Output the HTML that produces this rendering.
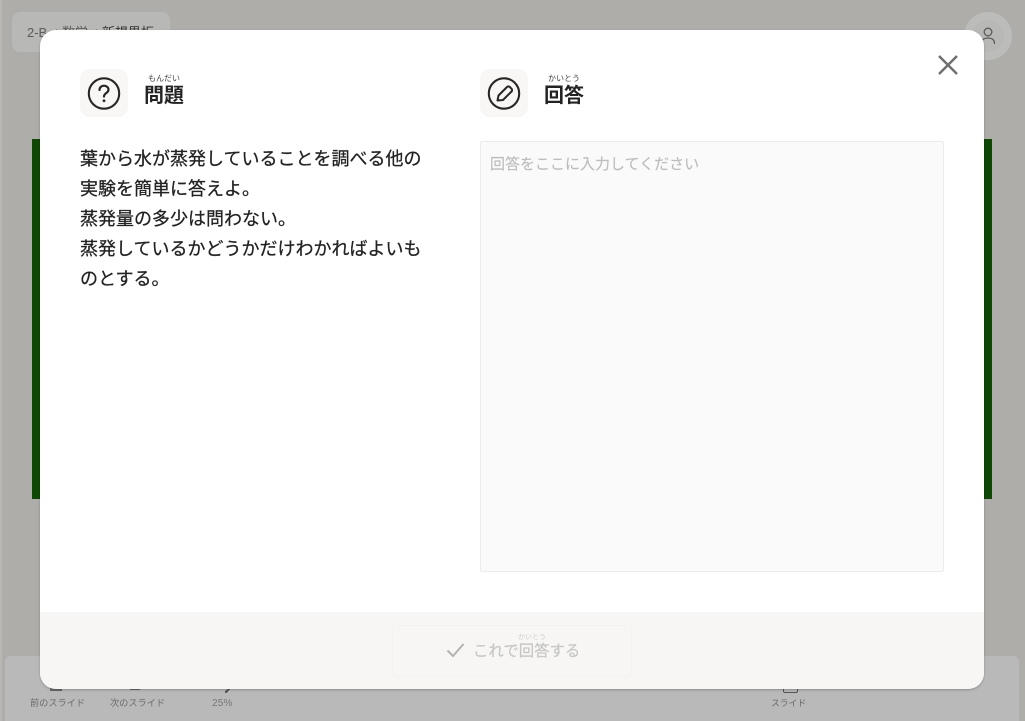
<!DOCTYPE html>
<html lang="ja">
<head>
<meta charset="utf-8">
<style>
*{box-sizing:border-box;margin:0;padding:0}
html,body{width:1025px;height:721px;overflow:hidden}
body{position:relative;background:#aeada9;font-family:"Liberation Sans","Noto Sans CJK JP",sans-serif;color:#232323}
.a{position:absolute;white-space:nowrap}
.t{line-height:1}
</style>
</head>
<body>
<div class="a" style="left:0;top:0;width:2px;height:721px;background:#b8b7b3"></div>
<div class="a" style="left:12px;top:12px;width:158px;height:40px;background:#b8b8b6;border-radius:8px"></div>
<div class="a t" style="left:27px;top:26px;font-size:13px;color:#5c5c5c">2-B<span style="margin:0 5px 0 7px;font-size:10px;color:#333">/</span>数学<span style="margin:0 5px 0 6px;font-size:10px;color:#333">/</span><span style="color:#333">新規黒板</span></div>
<div class="a" style="left:964px;top:12px;width:48px;height:48px;border-radius:50%;background:#bcbcba"></div>
<div class="a" style="left:972px;top:20px;width:32px;height:32px;border-radius:50%;background:#b8b8b6"></div>
<svg class="a" style="left:978px;top:25px" width="20" height="22" viewBox="0 0 20 22" fill="none" stroke="#5a5a5a" stroke-width="1.3"><circle cx="10" cy="7" r="3.800"/><path d="M3.500 18.500c0-4 3-5.500 6.500-5.500s6.500 1.500 6.500 5.500" stroke-linecap="round"/></svg>
<div class="a" style="left:32px;top:139px;width:960px;height:360px;background:#0e4804"></div>
<div class="a" style="left:5px;top:656px;width:1014px;height:65px;background:#b9b9b9;border-radius:6px 6px 0 0"></div>
<div class="a" style="left:50px;top:688px;width:12px;height:3px;background:#6a6a6a"></div>
<div class="a" style="left:130px;top:688px;width:10px;height:2px;background:#6a6a6a"></div>
<div class="a" style="left:225px;top:688px;width:5px;height:5px;background:linear-gradient(45deg,transparent 35%,#555 35%,#555 65%,transparent 65%);transform:rotate(90deg)"></div>
<div class="a" style="left:783px;top:686px;width:15px;height:7px;border:1.500px solid #555;border-top:0;border-radius:0 0 2px 2px"></div>
<div class="a t" style="left:30px;top:699px;font-size:9.200px;color:#6a6a6a">前のスライド</div>
<div class="a t" style="left:110px;top:699px;font-size:9.200px;color:#6a6a6a">次のスライド</div>
<div class="a t" style="left:212px;top:699px;font-size:10px;letter-spacing:.2px;color:#777">25%</div>
<div class="a t" style="left:771px;top:699px;font-size:8.800px;color:#6a6a6a">スライド</div>
<div class="a" style="left:40px;top:30px;width:944px;height:659px;background:#fff;border-radius:16px;overflow:hidden;box-shadow:0 1px 2px rgba(0,0,0,.25)">
  <div class="a" style="left:0;top:582px;width:944px;height:77px;background:#f7f6f4"></div>
  <div class="a" style="left:352px;top:595px;width:240px;height:52px;border:1px solid #f3f2f0;border-radius:4px"></div>
  <svg class="a" style="left:405px;top:610px" width="22" height="20" viewBox="0 0 22 20" fill="none" stroke="#b3b3b3" stroke-width="2"><path d="M2.500 10.500l5.500 5.500L18.500 4"/></svg>
  <div class="a t" style="left:433px;top:614px;font-size:15.400px;font-weight:400;-webkit-text-stroke:.2px #c6c6c5;color:#c6c6c5">これで回答する</div>
  <div class="a t" style="left:478px;top:604px;font-size:7px;color:#cfcfce">かいとう</div>
</div>
<div class="a" style="left:80px;top:69px;width:48px;height:48px;background:#f8f7f5;border-radius:10px"></div>
<svg class="a" style="left:80px;top:69px" width="48" height="48" viewBox="0 0 48 48" fill="none" stroke="#262626" stroke-width="2.100"><circle cx="24" cy="24.500" r="15.200"/><path d="M19.500 21c0-2.700 2.100-4.300 4.500-4.300s4.500 1.700 4.500 4c0 3.400-4.500 3.200-4.500 6.800" stroke-width="2.200" stroke-linecap="round"/><circle cx="24" cy="31.800" r="1.400" fill="#262626" stroke="none"/></svg>
<div class="a t" style="left:148px;top:75px;font-size:8px;color:#444">もんだい</div>
<div class="a t" style="left:144px;top:86px;font-size:20px;font-weight:700;color:#232323">問題</div>
<div class="a" style="left:480px;top:69px;width:48px;height:48px;background:#f8f7f5;border-radius:10px"></div>
<svg class="a" style="left:480px;top:69px" width="48" height="48" viewBox="0 0 48 48" fill="none" stroke="#262626" stroke-width="2.100"><circle cx="24" cy="24.500" r="15.200"/><path d="M17.500 31.500l1-5 8.500-8.500a2 2 0 0 1 2.800 0l1.700 1.700a2 2 0 0 1 0 2.800l-8.500 8.500z" stroke-width="2" stroke-linejoin="round"/></svg>
<div class="a t" style="left:548px;top:75px;font-size:8px;color:#444">かいとう</div>
<div class="a t" style="left:544px;top:86px;font-size:20px;font-weight:700;color:#232323">回答</div>
<svg class="a" style="left:934px;top:51px" width="28" height="28" viewBox="0 0 28 28" fill="none" stroke="#6e6e6e" stroke-width="2.400"><path d="M5 5l18 18M23 5L5 23"/></svg>
<div class="a" style="left:80px;top:144px;width:345px;font-size:18px;line-height:30px;font-weight:400;-webkit-text-stroke:.25px #222;color:#222">葉から水が蒸発していることを調べる他の<br>実験を簡単に答えよ。<br>蒸発量の多少は問わない。<br>蒸発しているかどうかだけわかればよいも<br>のとする。</div>
<div class="a" style="left:480px;top:141px;width:464px;height:431px;background:#fafafa;border:1px solid #ececec;border-radius:2px"></div>
<div class="a t" style="left:490px;top:157px;font-size:15px;-webkit-text-stroke:.15px #bdbdbd;color:#bdbdbd">回答をここに入力してください</div>
</body>
</html>
